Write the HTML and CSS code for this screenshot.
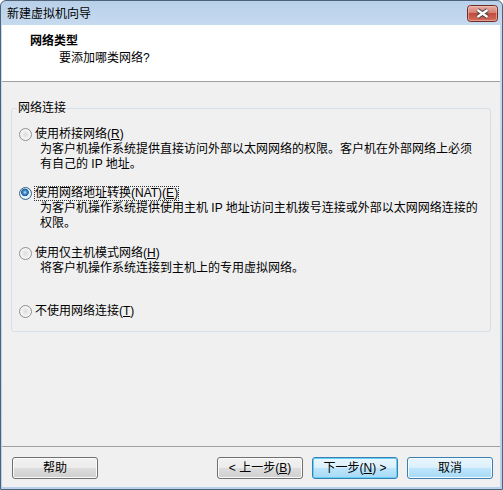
FILE: index.html
```html
<!DOCTYPE html>
<html lang="zh-CN">
<head>
<meta charset="utf-8">
<title>新建虚拟机向导</title>
<link rel="stylesheet" href="styles.css">
</head>
<body>
<div class="window">
  <div class="titlebar">
    <span class="title">新建虚拟机向导</span>
    <span class="close">
      <svg width="31" height="17" viewBox="0 0 31 17">
        <defs>
          <linearGradient id="cg" x1="0" y1="0" x2="0" y2="1">
            <stop offset="0" stop-color="#e8b0a8"/>
            <stop offset="0.45" stop-color="#d77f72"/>
            <stop offset="0.5" stop-color="#c24a3d"/>
            <stop offset="1" stop-color="#d4705f"/>
          </linearGradient>
        </defs>
        <rect x="0.5" y="0.5" width="30" height="16" rx="3" fill="url(#cg)" stroke="#6e2c25"/>
        <rect x="1.5" y="1.5" width="28" height="14" rx="2" fill="none" stroke="#f2c8c0" stroke-opacity="0.55"/>
        <path d="M10.5 5 L20.5 12 M20.5 5 L10.5 12" stroke="#3d3d3d" stroke-width="4.2"/>
        <path d="M10.5 5 L20.5 12 M20.5 5 L10.5 12" stroke="#ffffff" stroke-width="2.4"/>
      </svg>
    </span>
  </div>
  <div class="client">
    <div class="header">
      <div class="h-title">网络类型</div>
      <div class="h-sub">要添加哪类网络?</div>
    </div>
    <div class="content">
      <fieldset class="group">
        <legend>网络连接</legend>
        <div class="options">
          <div class="option">
            <div class="opt-label"><span class="radio"></span><span>使用桥接网络(<u>R</u>)</span></div>
            <div class="desc">为客户机操作系统提供直接访问外部以太网网络的权限。客户机在外部网络上必须<br>有自己的 IP 地址。</div>
          </div>
          <div class="option option-nat">
            <div class="opt-label"><span class="radio radio-on"></span><span class="focus">使用网络地址转换(NAT)(<u>E</u>)</span></div>
            <div class="desc">为客户机操作系统提供使用主机 IP 地址访问主机拨号连接或外部以太网网络连接的<br>权限。</div>
          </div>
          <div class="option option-host">
            <div class="opt-label"><span class="radio"></span><span>使用仅主机模式网络(<u>H</u>)</span></div>
            <div class="desc">将客户机操作系统连接到主机上的专用虚拟网络。</div>
          </div>
          <div class="option option-none">
            <div class="opt-label"><span class="radio"></span><span>不使用网络连接(<u>T</u>)</span></div>
          </div>
        </div>
      </fieldset>
    </div>
    <div class="footer">
      <button class="btn">帮助</button>
      <div class="nav">
        <button class="btn">&lt; 上一步(<u>B</u>)</button>
        <button class="btn btn-default">下一步(<u>N</u>) &gt;</button>
        <button class="btn btn-hot">取消</button>
      </div>
    </div>
  </div>
</div>
</body>
</html>
```
FILE: styles.css
```css
html, body {
  margin: 0;
  padding: 0;
}
body {
  width: 503px;
  height: 490px;
  overflow: hidden;
  font-family: "Liberation Sans", "Noto Sans CJK SC", sans-serif;
  font-size: 12px;
  line-height: 15px;
  color: #000;
}
.window {
  width: 503px;
  height: 490px;
  box-sizing: border-box;
  border: 1px solid #4f6378;
  border-radius: 6px 6px 0 0;
  background: linear-gradient(to bottom, #b8d0ea 0, #c6daef 24px, #c0d6ee 60%, #b4d0ec 100%);
  padding: 0 2px 2px 1px;
  display: flex;
  flex-direction: column;
}
.titlebar {
  height: 24px;
  box-sizing: border-box;
  display: flex;
  align-items: flex-start;
  padding: 6px 2px 0 5px;
}
.title {
  flex: 1;
  color: #000;
}
.close {
  width: 31px;
  height: 17px;
  margin-top: -2px;
  display: block;
}
.close svg {
  display: block;
}
.client {
  flex: 1;
  display: flex;
  flex-direction: column;
  background: #f0f0f0;
}
.header {
  background: #fff;
  height: 57px;
  box-sizing: border-box;
  border-bottom: 1px solid #a0a0a0;
  padding: 9px 0 0 28px;
}
.h-title {
  font-weight: bold;
}
.h-sub {
  margin-top: 2px;
  padding-left: 29px;
}
.content {
  flex: 1;
  padding: 19px 9px 0 9px;
}
.group {
  margin: 0;
  padding: 0;
  border: 1px solid #d5dfe5;
  border-radius: 3px;
  min-width: 0;
}
.group legend {
  margin-left: 5px;
  padding: 0 1px;
  line-height: 15px;
}
.options {
  padding: 11px 7px 12px 7px;
}
.option-nat {
  margin-top: 14px;
}
.option-host {
  margin-top: 15px;
}
.option-none {
  margin-top: 28px;
}
.opt-label {
  display: flex;
  align-items: center;
  height: 15px;
  white-space: nowrap;
}
.radio {
  width: 13px;
  height: 13px;
  box-sizing: border-box;
  border-radius: 50%;
  border: 1px solid #8e9092;
  background: radial-gradient(circle at 50% 50%, #dcdcdc 0, #ececec 3px, #f6f6f6 5px, #e4e4e4 6px);
  margin-right: 3px;
  flex: none;
}
.radio-on {
  border-color: #2c628b;
  background: radial-gradient(circle at 45% 40%, #b9e2fb 0, #3a88c8 2px, #1c5a96 3.5px, #f0f6fb 4.2px, #e3ecf4 6px);
}
.focus {
  outline: 1px dotted #333;
  outline-offset: -1px;
  padding: 0 1px;
  margin-left: -1px;
}
.desc {
  padding-left: 21px;
  white-space: nowrap;
}
.footer {
  border-top: 1px solid #a0a0a0;
  padding: 10px 7px 8px 10px;
  display: flex;
  justify-content: space-between;
}
.nav {
  display: flex;
  gap: 9px;
}
.btn {
  width: 86px;
  height: 22px;
  box-sizing: border-box;
  margin: 0;
  padding: 0;
  border: 1px solid #707070;
  border-radius: 3px;
  background: linear-gradient(to bottom, #f2f2f2 0, #ebebeb 50%, #dddddd 50%, #cfcfcf 100%);
  box-shadow: inset 0 0 0 1px #fbfbfb;
  font-family: "Liberation Sans", "Noto Sans CJK SC", sans-serif;
  font-size: 12px;
  line-height: 15px;
  color: #000;
}
.btn-default {
  border-color: #3c7fb1;
  background: linear-gradient(to bottom, #eaf6fd 0, #d9f0fc 50%, #bee6fd 50%, #a7d9f5 100%);
  box-shadow: inset 0 0 0 1px #5fd2f6;
}
.btn-hot {
  border-color: #3c7fb1;
  background: linear-gradient(to bottom, #eaf6fd 0, #d9f0fc 50%, #bee6fd 50%, #a7d9f5 100%);
  box-shadow: inset 0 0 0 1px #f4fbff;
}
```
